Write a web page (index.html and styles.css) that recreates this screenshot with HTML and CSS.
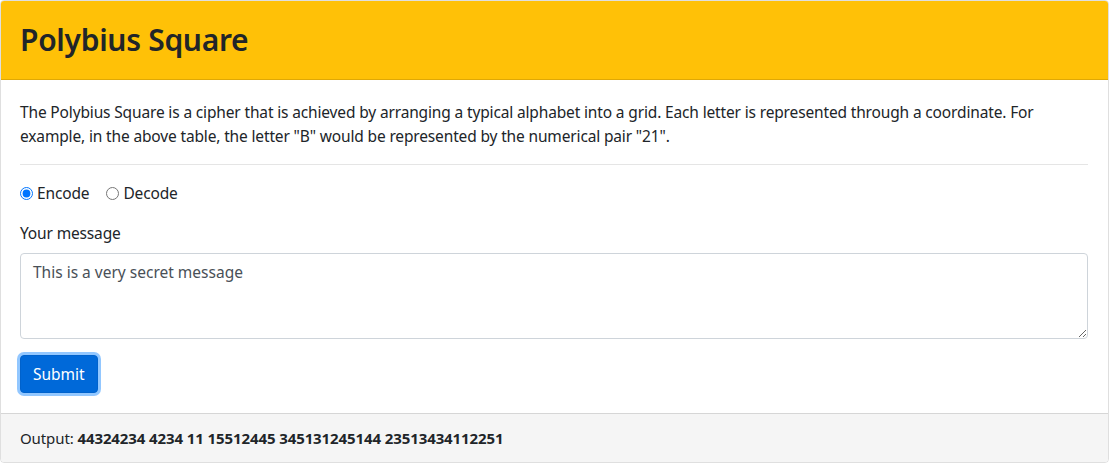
FILE: index.html
```html
<!DOCTYPE html>
<html>
<head>
<meta charset="utf-8">
<link rel="stylesheet" href="styles.css">
</head>
<body>
<div class="card">
  <div class="card-header">
    <h2 class="title">Polybius Square</h2>
  </div>
  <div class="card-body">
    <p class="intro">The Polybius Square is a cipher that is achieved by arranging a typical alphabet into a grid. Each letter is represented through a coordinate. For example, in the above table, the letter "B" would be represented by the numerical pair "21".</p>
    <hr class="divider">
    <div class="radios">
      <label class="check"><input type="radio" name="mode" checked> Encode</label>
      <label class="check"><input type="radio" name="mode"> Decode</label>
    </div>
    <div class="group">
      <label class="label" for="msg">Your message</label>
      <textarea id="msg" class="input" rows="3">This is a very secret message</textarea>
    </div>
    <button class="btn">Submit</button>
  </div>
  <div class="card-footer">Output: <strong>44324234 4234 11 15512445 345131245144 23513434112251</strong></div>
</div>
</body>
</html>
```
FILE: styles.css
```css
html, body {
  margin: 0;
  padding: 0;
  background: #fff;
}
body {
  font-family: "Noto Sans", "Open Sans", sans-serif;
  font-size: 15.5px;
  letter-spacing: -0.15px;
  line-height: 24px;
  color: #212529;
}
.card {
  width: 1109px;
  box-sizing: border-box;
  border: 1px solid rgba(0,0,0,.125);
  border-radius: 4px;
  overflow: hidden;
}
.card-header {
  background: #ffc107;
  border-bottom: 1px solid rgba(0,0,0,.125);
  padding: 0 19px;
  height: 79px;
  box-sizing: border-box;
  display: flex;
  align-items: center;
}
.title {
  margin: 0;
  font-size: 30px;
  font-weight: 600;
  letter-spacing: -0.3px;
  line-height: 38px;
}
.card-body {
  padding: 20px 20px 20px 19px;
}
.intro {
  margin: 0 0 16px;
}
.divider {
  margin: 0 0 16px;
  border: 0;
  border-top: 1px solid rgba(0,0,0,.1);
}
.radios {
  display: flex;
  gap: 17px;
  margin-bottom: 16px;
}
.check {
  display: flex;
  align-items: center;
  gap: 4px;
}
.check input {
  margin: 0;
  width: 13px;
  height: 13px;
}
.group {
  margin-bottom: 16px;
}
.label {
  display: block;
  margin-bottom: 8px;
}
.input {
  display: block;
  width: 100%;
  box-sizing: border-box;
  height: 86px;
  padding: 6px 12px;
  font: inherit;
  line-height: 24px;
  color: #495057;
  border: 1px solid #ced4da;
  border-radius: 4px;
  resize: vertical;
}
.btn {
  font: inherit;
  color: #fff;
  background: #0069d9;
  border: 1px solid #0062cc;
  border-radius: 4px;
  padding: 6px 12px;
  line-height: 24px;
  box-shadow: 0 0 0 3px rgba(38,143,255,.5);
}
.card-footer {
  background: #f5f5f5;
  border-top: 1px solid rgba(0,0,0,.125);
  padding: 12px 19px;
  font-size: 15px;
  letter-spacing: -0.1px;
}
.card-footer strong {
  font-weight: 700;
}
```
